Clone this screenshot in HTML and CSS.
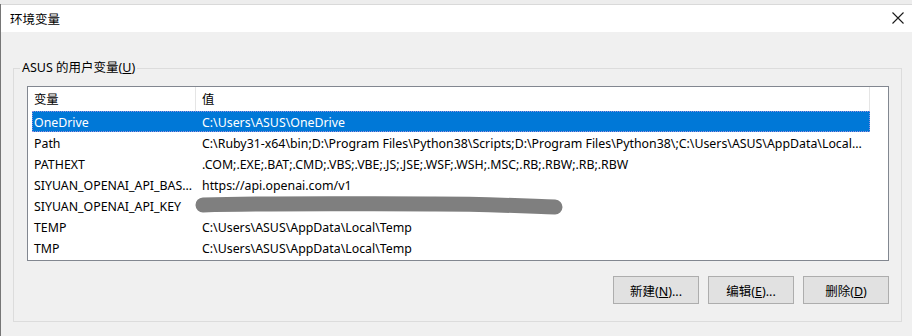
FILE: index.html
```html
<!DOCTYPE html>
<html lang="zh-CN">
<head>
    <meta charset="UTF-8">
    <title>环境变量</title>
    <link rel="stylesheet" href="styles.css">
</head>
<body>
    <div class="behind"></div>
    <div class="window">
        <div class="titlebar">
            <span class="title">环境变量</span>
            <svg class="close" width="12" height="12" viewBox="0 0 12 12">
                <path d="M0.5 0.5 L11.5 11.5 M11.5 0.5 L0.5 11.5" stroke="#1a1a1a" stroke-width="1.1" fill="none"/>
            </svg>
        </div>
        <div class="content">
            <fieldset class="group">
                <legend>ASUS 的用户变量(<u>U</u>)</legend>
                <div class="listview">
                    <div class="lv-header">
                        <div class="hcol name">变量</div>
                        <div class="hcol value">值</div>
                        <div class="hcol rest"></div>
                    </div>
                    <div class="lv-row selected">
                        <div class="cell name">OneDrive</div>
                        <div class="cell value">C:\Users\ASUS\OneDrive</div>
                    </div>
                    <div class="lv-row">
                        <div class="cell name">Path</div>
                        <div class="cell value">C:\Ruby31-x64\bin;D:\Program Files\Python38\Scripts;D:\Program Files\Python38\;C:\Users\ASUS\AppData\Local...</div>
                    </div>
                    <div class="lv-row">
                        <div class="cell name">PATHEXT</div>
                        <div class="cell value">.COM;.EXE;.BAT;.CMD;.VBS;.VBE;.JS;.JSE;.WSF;.WSH;.MSC;.RB;.RBW;.RB;.RBW</div>
                    </div>
                    <div class="lv-row">
                        <div class="cell name">SIYUAN_OPENAI_API_BAS...</div>
                        <div class="cell value">https://api.openai.com/v1</div>
                    </div>
                    <div class="lv-row">
                        <div class="cell name">SIYUAN_OPENAI_API_KEY</div>
                        <div class="cell value redacted">
                            <svg class="scribble" width="380" height="24" viewBox="0 0 380 24">
                                <path d="M8 11 C 80 9, 160 10, 240 10 C 290 10, 330 12, 360 13" stroke="#7f7f7f" stroke-width="15" stroke-linecap="round" fill="none"/>
                            </svg>
                        </div>
                    </div>
                    <div class="lv-row">
                        <div class="cell name">TEMP</div>
                        <div class="cell value">C:\Users\ASUS\AppData\Local\Temp</div>
                    </div>
                    <div class="lv-row">
                        <div class="cell name">TMP</div>
                        <div class="cell value">C:\Users\ASUS\AppData\Local\Temp</div>
                    </div>
                </div>
                <div class="buttons">
                    <button class="btn">新建(<u>N</u>)...</button>
                    <button class="btn">编辑(<u>E</u>)...</button>
                    <button class="btn">删除(<u>D</u>)</button>
                </div>
            </fieldset>
            <fieldset class="group next">
                <legend>系统变量(<u>S</u>)</legend>
            </fieldset>
        </div>
    </div>
</body>
</html>
```

FILE: styles.css
```css
body {
    margin: 0;
    width: 912px;
    height: 336px;
    overflow: hidden;
    background-color: #f0f0f0;
    font-family: "Noto Sans", "Noto Sans CJK SC", sans-serif;
    font-size: 12px;
    color: #000;
}

.behind {
    height: 4px;
    background-color: #ededed;
}

.window {
    border-left: 1px solid #767676;
    height: 332px;
}

.titlebar {
    height: 27px;
    background-color: #fff;
    border-top: 1px solid #d9d9d9;
    display: flex;
    align-items: center;
    justify-content: space-between;
    padding: 0 8px 0 9px;
}

.title {
    font-size: 12.5px;
    color: #000;
}

.close {
    margin-top: -1px;
}

.content {
    background-color: #f0f0f0;
    padding: 0 10px 0 12px;
}

.group {
    margin: 28px 0 0 0;
    padding: 0 12px 17px 13px;
    border: 1px solid #dcdcdc;
    min-width: 0;
}

.group legend {
    margin-left: -7px;
    padding: 0 2px;
    line-height: 16px;
    font-size: 12.5px;
}

.group.next {
    margin-top: 14px;
    height: 40px;
}

.listview {
    margin-top: 10px;
    width: 860px;
    height: 173px;
    border: 1px solid #828790;
    background-color: #fff;
    overflow: hidden;
    font-size: 12.35px;
}

.lv-header {
    display: flex;
    height: 24px;
}

.hcol {
    display: flex;
    align-items: center;
    padding-left: 6px;
    border-right: 1px solid #e5e5e5;
    box-sizing: border-box;
}

.hcol.name {
    width: 168px;
}

.hcol.value {
    width: 674px;
}

.hcol.rest {
    flex: 1;
    border-right: none;
}

.lv-row {
    display: flex;
    height: 21px;
    width: 838px;
    margin-left: 4px;
    box-sizing: border-box;
    white-space: nowrap;
    padding-top: 1px;
}

.lv-row.selected {
    background-color: #0078d7;
    color: #fff;
    outline: 1px dotted #9a90dc;
    outline-offset: -1px;
}

.cell {
    display: flex;
    align-items: center;
    overflow: hidden;
}

.cell.name {
    width: 164px;
    padding-left: 2px;
    box-sizing: border-box;
}

.cell.value {
    flex: 1;
    padding-left: 6px;
}

.cell.redacted {
    position: relative;
    overflow: visible;
}

.scribble {
    position: absolute;
    left: -1px;
    top: -2px;
}

.buttons {
    display: flex;
    justify-content: flex-end;
    gap: 9px;
    width: 862px;
    margin-top: 15px;
}

.btn {
    width: 86px;
    height: 28px;
    background-color: #e1e1e1;
    border: 1px solid #adadad;
    font-family: "Noto Sans", "Noto Sans CJK SC", sans-serif;
    font-size: 12.5px;
    color: #000;
    padding: 0;
}
```
